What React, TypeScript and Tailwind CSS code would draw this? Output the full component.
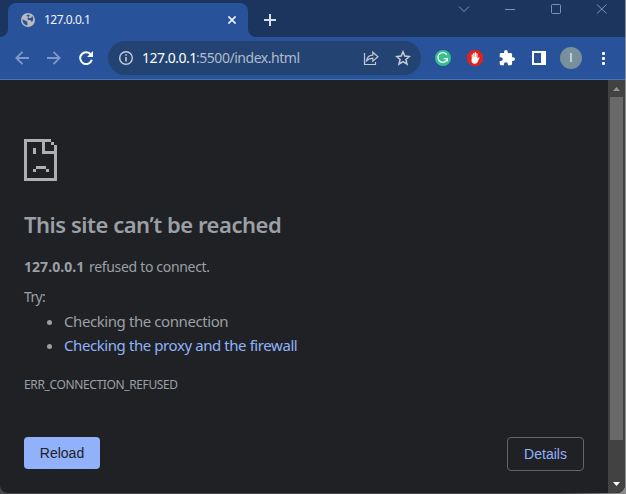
import React from "react";

const ui = "font-['Noto_Sans','Open_Sans',sans-serif]";

function TabStrip() {
  return (
    <div className="flex h-[37px] bg-[#1b355f]">
      <div className="flex w-2 items-end bg-[#28539b]">
        <div className="h-[37px] w-2 rounded-br-lg bg-[#1b355f]" />
      </div>
      <div className="flex w-[240px] flex-col bg-[#1b355f] pt-[3px]">
        <div className="flex h-[34px] items-center rounded-t-lg bg-[#28539b] pl-[13px] pr-[12px]">
          <svg className="h-[14px] w-[14px] shrink-0" viewBox="0 0 14 14">
            <circle cx="7" cy="7" r="7" fill="#b9bbbc" />
            <path d="M1.5 6.2L5 8.1L6.4 9.1V12.4C3.5 12.2 1.4 9.6 1.5 6.2ZM5.2 2.1L8.6 1.8L8.4 3.3L6.9 4.3V5.4L5.7 6.1L7.6 7H9.4L10.2 8.5L11.3 8.6C12.6 6.7 12.5 4.4 11.1 2.9L10.2 4.7L8.3 5.3" fill="#28539b" />
          </svg>
          <span className={`${ui} ml-[9px] w-[60px] whitespace-nowrap text-[12px] leading-[18px] tracking-[-0.5px] text-[#f1f4f9]`}>127.0.0.1</span>
          <svg className="ml-auto h-[8px] w-[8px]" viewBox="0 0 8 8" stroke="#f0f3f8" strokeWidth="1.6">
            <path d="M.4 .4L7.6 7.6M7.6 .4L.4 7.6" />
          </svg>
        </div>
      </div>
      <div className="w-2 bg-[#28539b]">
        <div className="h-[37px] w-2 rounded-bl-lg bg-[#1b355f]" />
      </div>
      <svg className="ml-2 mt-[14px] h-3 w-3" viewBox="0 0 12 12" stroke="#d8dee8" strokeWidth="2">
        <path d="M0 6H12M6 0V12" />
      </svg>
      <svg className="ml-[182px] mt-1 h-[11px] w-[150px]" viewBox="458 4 150 11" fill="none" stroke="#8292ad" strokeWidth="1">
        <path d="M459 6.5L464 11.5L469 6.5M505 9.5H515M597 4.5L606.5 13.5M606.5 4.5L597 13.5" />
        <rect x="551.5" y="4.5" width="9" height="9" rx="1" />
      </svg>
    </div>
  );
}

function Toolbar() {
  return (
    <div className="flex h-[43px] items-center border-b border-[#4775b9] bg-[#28539b] pl-[15px]">
      <svg className="h-[14px] w-[14px]" viewBox="0 0 14 14" fill="none" stroke="#8098c6" strokeWidth="1.8">
        <path d="M14 7H1.5M7.5 .8L1.3 7L7.5 13.2" />
      </svg>
      <svg className="ml-[18px] h-[14px] w-[14px]" viewBox="0 0 14 14" fill="none" stroke="#8098c6" strokeWidth="1.8">
        <path d="M0 7H12.5M6.5 .8L12.7 7L6.5 13.2" />
      </svg>
      <svg className="ml-[18px] h-[14px] w-[14px]" viewBox="0 0 14 14" fill="none">
        <path d="M11.9 3.7A5.9 5.9 0 1 0 12.8 8.8" stroke="#fff" strokeWidth="2" />
        <path d="M14 0V6H8Z" fill="#fff" />
      </svg>
      <div className="ml-[15px] flex h-[34px] w-[313px] items-center rounded-full bg-[#234372] pl-[11px] pr-[10px]">
        <svg className="h-[14px] w-[14px] shrink-0" viewBox="0 0 14 14" fill="none" stroke="#c7cdd5">
          <circle cx="7" cy="7" r="6.3" strokeWidth="1.4" />
          <path d="M7 6V10.4M7 3.2V4.8" strokeWidth="1.6" />
        </svg>
        <span className={`${ui} ml-[9px] whitespace-nowrap text-[14px] leading-5 tracking-[-0.47px] text-[#afbbcc]`}>
          <span className="inline-block w-[54px] tracking-[-0.52px] text-white">127.0.0.1</span>:5500/index.html
        </span>
        <svg className="ml-auto h-4 w-4 shrink-0" viewBox="0 0 16 16" fill="none" stroke="#c3c8ce" strokeWidth="1.2">
          <path d="M1.5 3V14.5H12.5V12M3.5 10.8C4.2 7 6.2 5.3 9.8 5.2V2.2L14.9 6.8L9.8 11.1V8.1C7 8.1 5.3 8.8 3.5 10.8Z" />
        </svg>
        <svg className="ml-4 h-4 w-4 shrink-0" viewBox="0 0 16 16" fill="none" stroke="#c9ced3" strokeWidth="1.5">
          <path d="M8 1.8L9.8 6.1L14.4 6.5L10.9 9.5L12 14.1L8 11.6L4 14.1L5.1 9.5L1.6 6.5L6.2 6.1Z" />
        </svg>
      </div>
      <svg className="ml-[14px] h-4 w-4" viewBox="0 0 16 16" fill="none">
        <circle cx="8" cy="8" r="8" fill="#3bbd91" />
        <path d="M11.8 4.8A4.8 4.8 0 1 0 12.4 8.7H8.7M12.4 8.7V11.5" stroke="#e9fff6" strokeWidth="1.3" />
      </svg>
      <svg className="ml-4 h-4 w-4" viewBox="0 0 16 16">
        <path d="M4.7 0H11.3L16 4.7V11.3L11.3 16H4.7L0 11.3V4.7Z" fill="#dc241f" />
        <path d="M4.7 9V4.8Q4.7 4.2 5.2 4.2T5.8 4.8V7H6.2V3.3Q6.2 2.7 6.8 2.7T7.4 3.3V6.8H7.8V2.7Q7.8 2.1 8.4 2.1T9 2.7V7H9.4V3.7Q9.4 3.1 9.9 3.1T10.5 3.7V8.6L11.6 7.5Q12.2 7 12.6 7.6L10.5 12.3Q9.8 13.7 8.2 13.7H7.4Q4.5 13.7 4.5 9.9Z" fill="#fff" />
      </svg>
      <svg className="ml-4 h-4 w-4" viewBox="1 1 22 22" fill="#fff">
        <path d="M20.5 11H19V7c0-1.1-.9-2-2-2h-4V3.5a2.5 2.5 0 0 0-5 0V5H4c-1.1 0-2 .9-2 2v3.8h1.5a2.7 2.7 0 0 1 0 5.4H2V20c0 1.1.9 2 2 2h3.8v-1.5a2.7 2.7 0 0 1 5.4 0V22H17c1.1 0 2-.9 2-2v-4h1.5a2.5 2.5 0 0 0 0-5z" />
      </svg>
      <div className="ml-[17px] h-[14px] w-[14px] border-2 border-r-[5px] border-white" />
      <div className="ml-[14px] flex h-[22px] w-[22px] items-center justify-center rounded-full bg-[#78909c] font-['Roboto',sans-serif] text-[12px] text-[#edf1f3]">I</div>
      <div className="ml-[20px] flex flex-col gap-[2px]">
        <i className="h-[3px] w-[3px] rounded-[1px] bg-white" />
        <i className="h-[3px] w-[3px] rounded-[1px] bg-white" />
        <i className="h-[3px] w-[3px] rounded-[1px] bg-white" />
      </div>
    </div>
  );
}

function ErrorPage() {
  return (
    <main className={`${ui} h-[413px] w-[608px] whitespace-nowrap pl-6 pt-[59px] text-[#9aa0a6]`}>
      <svg className="h-[42px] w-[33px]" viewBox="0 0 33 42" fill="#aeafb0" shapeRendering="crispEdges">
        <path d="M0 0H27V3H3V39H30V15H18V3H21V12H30V6H33V42H0ZM27 3H30V6H27ZM9 9H12V15H9ZM12 27H22V30H12ZM9 30H12V33H9ZM22 30H25V33H22Z" />
      </svg>
      <h1 className="mt-[27px] h-8 text-[22px] font-semibold leading-8 tracking-[-0.48px]">This site can’t be reached</h1>
      <p className="mt-[17px] h-5 text-[14px] leading-5 tracking-[-0.32px]"><strong className="inline-block w-[65px] tracking-[0.05px]">127.0.0.1</strong>refused to connect.</p>
      <p className="mt-[10px] h-5 text-[14px] leading-5 tracking-[-0.7px]">Try:</p>
      <ul className="mt-[2px] text-[15px] leading-6">
        <li className="flex h-6 items-center"><i className="ml-[23px] mr-3 mt-[2px] h-[5px] w-[5px] rounded-full bg-[#9aa0a6]" /><span className="tracking-[-0.42px]">Checking the connection</span></li>
        <li className="flex h-6 items-center text-[#91b2fb]"><i className="ml-[23px] mr-3 mt-[2px] h-[5px] w-[5px] rounded-full bg-[#9aa0a6]" /><a className="tracking-[-0.42px]">Checking the proxy and the firewall</a></li>
      </ul>
      <p className="mt-[18px] h-5 text-[12px] leading-5 tracking-[-0.37px]">ERR_CONNECTION_REFUSED</p>
      <div className="mt-[42px] flex items-start justify-between pr-6 font-['Liberation_Sans',Arial,sans-serif] text-[14px]">
        <button className="h-8 w-[76px] rounded bg-[#91b2fb] text-[#202124]">Reload</button>
        <button className="h-[34px] w-[77px] rounded border border-[#62666b] text-[#91b2fb]">Details</button>
      </div>
    </main>
  );
}

function Scrollbar() {
  return (
    <div className="flex h-[413px] w-[17px] flex-col items-center rounded-br-lg bg-[#424242]">
      <svg className="h-[17px] w-[17px]" viewBox="0 0 17 17" fill="#929292"><path d="M5 11L8.5 7L12 11Z" /></svg>
      <div className="h-[343px] w-[13px] bg-[#696969]" />
      <svg className="mt-[35px] h-[17px] w-[17px]" viewBox="0 0 17 17" fill="#fff"><path d="M5 7L8.5 11L12 7Z" /></svg>
    </div>
  );
}

export default function App() {
  return (
    <div className="h-[494px] w-[626px] overflow-hidden bg-linear-to-r from-[#47484a] from-90% to-[#8d8e90]">
      <div className="h-[493px] w-[625px] overflow-hidden rounded-b-lg bg-[#202124]">
        <TabStrip />
        <Toolbar />
        <div className="flex h-[413px]">
          <ErrorPage />
          <Scrollbar />
        </div>
      </div>
    </div>
  );
}
